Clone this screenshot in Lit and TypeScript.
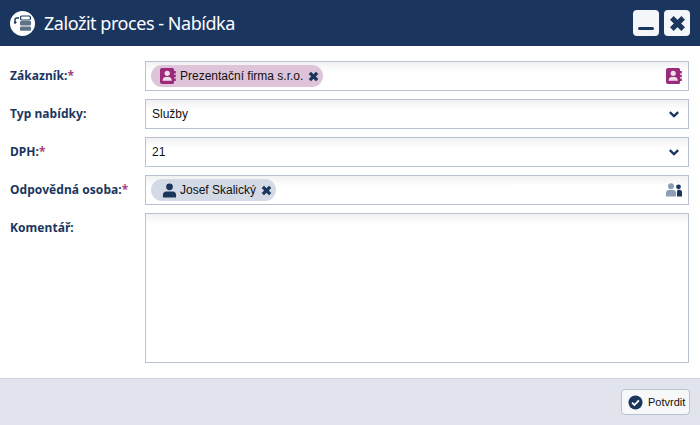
import { LitElement, html, css } from "lit";
import { customElement } from "lit/decorators.js";

const book = (c: string) => html`<svg width="16" height="16" viewBox="0 0 16 16"><path fill=${c} d="M2 0h10.500A1.500 1.500 0 0 1 14 1.500V3h1.800v2.400H14v1.400h1.800v2.400H14v1.400h1.800V13H14v1.500a1.500 1.500 0 0 1-1.500 1.500H2a2 2 0 0 1-2-2V2a2 2 0 0 1 2-2z"/><circle cx="7.200" cy="5.300" r="2.600" fill="#fff" opacity=".85"/><path fill="#fff" opacity=".85" d="M2.600 12.800c0-2.300 1.300-3.700 2.900-3.700h3.400c1.600 0 2.900 1.400 2.900 3.700z"/></svg>`;
const x = (s: number, c = "#1b365d") => html`<svg width=${s} height=${s} viewBox="0 0 12 12"><path d="M2 2l8 8M10 2l-8 8" stroke=${c} stroke-width="3.600" stroke-linecap="butt" fill="none"/></svg>`;
const chev = html`<svg width="10" height="7" viewBox="0 0 10 7"><path d="M.8 1.200 5 5.200l4.200-4" stroke="#1b365d" stroke-width="2.300" fill="none"/></svg>`;

@customElement("app-root")
export class AppRoot extends LitElement {
  static styles = css`
    :host { display: flex; flex-direction: column; width: 700px; height: 425px; background: #fff; overflow: hidden; font-family: "Liberation Sans", Arial, sans-serif; font-size: 12px; color: #1b2a41; }
    .head { height: 46px; flex: none; background: #1a365f; display: flex; align-items: center; padding: 0 10px; color: #fff; box-sizing: border-box; }
    .logo { width: 25px; height: 25px; border-radius: 50%; background: #fff; display: flex; align-items: center; justify-content: center; margin-right: 9px; }
    .title { flex: 1; font: 18px/21px "Noto Sans", sans-serif; letter-spacing: -.46px; color: #fff; padding-top: 1px; }
    .wbtn { width: 26px; height: 26px; border-radius: 4px; background: #f5f6f9; display: flex; align-items: center; justify-content: center; margin-left: 5px; }
    .body { flex: 1; padding: 15px 11px 15px 10px; display: flex; flex-direction: column; gap: 8px; }
    .row { display: flex; height: 30px; flex: none; }
    .row.big { height: 150px; }
    .lab { width: 135px; flex: none; font: bold 12px "Noto Sans", sans-serif; letter-spacing: .06px; color: #1a365f; padding-top: 6px; box-sizing: border-box; line-height: 17px; }
    .lab i { color: #a8447f; font-style: normal; font-weight: bold; }
    .box { flex: 1; border: 1px solid #b8c2d2; background: linear-gradient(#f1f1f1, #fff 10px); display: flex; align-items: center; padding: 0 5px; box-sizing: border-box; min-width: 0; }
    .plain { padding-left: 6px; color: #111; }
    .sp { flex: 1; }
    .chip { height: 22px; border-radius: 11px; display: flex; align-items: center; color: #111; box-sizing: border-box; }
    .chip.a { background: #dfc3d8; width: 172px; padding-left: 9px; }
    .chip.b { background: #d3dae6; width: 125px; padding-left: 11px; }
    .chip .t { margin-left: 4px; flex: none; }
    .chip.b .t { margin-left: 3px; }
    .chip .c { margin-left: 5px; display: flex; }
    .end { display: flex; margin-right: 1px; }
    .end.c { margin-right: 4px; }
    .foot { height: 47px; flex: none; background: #e1e4ec; border-top: 1px solid #ced2da; box-sizing: border-box; display: flex; justify-content: flex-end; align-items: flex-start; padding: 10px 10px 0 0; }
    .btn { width: 69px; height: 26px; box-sizing: border-box; border: 1px solid #b8c2d2; border-radius: 4px; background: #f7f8fa; display: flex; align-items: center; padding-left: 6px; gap: 5px; color: #111; font-size: 11px; }
  `;
  render() {
    return html`
      <div class="head">
        <div class="logo"><svg width="17" height="16" viewBox="0 0 17 16">
          <rect x="6.600" y="1" width="9.800" height="4" rx="1.200" fill="none" stroke="#1b365d" stroke-width="1.200"/>
          <rect x="6" y="6" width="11" height="4.400" rx="1" fill="#5f7188"/>
          <rect x="6" y="11.400" width="11" height="4.400" rx="1" fill="#5f7188"/>
          <path d="M5 3H2.400a1.400 1.400 0 0 0-1.400 1.400V8M1 8.400-.2 6.800M1 8.400l1.300-1.600" stroke="#1b365d" stroke-width="1.400" fill="none"/>
        </svg></div>
        <div class="title">Založit proces - Nabídka</div>
        <div class="wbtn"><svg width="18" height="18" viewBox="0 0 18 18"><rect x="1" y="13" width="16" height="3" rx="1.500" fill="#1b365d"/></svg></div>
        <div class="wbtn">${x(17)}</div>
      </div>
      <div class="body">
        <div class="row"><div class="lab">Zákazník:<i>*</i></div><div class="box">
          <div class="chip a">${book("#9c2a7c")}<span class="t">Prezentační firma s.r.o.</span><span class="c">${x(11)}</span></div>
          <span class="sp"></span><span class="end">${book("#9c2a7c")}</span></div></div>
        <div class="row"><div class="lab">Typ nabídky:</div><div class="box plain"><span>Služby</span><span class="sp"></span><span class="end c">${chev}</span></div></div>
        <div class="row"><div class="lab">DPH:<i>*</i></div><div class="box plain"><span>21</span><span class="sp"></span><span class="end c">${chev}</span></div></div>
        <div class="row"><div class="lab">Odpovědná osoba:<i>*</i></div><div class="box">
          <div class="chip b"><svg width="15" height="15" viewBox="0 0 16 16"><circle cx="8" cy="4" r="3.600" fill="#1b365d"/><path fill="#1b365d" d="M1 15.500v-3c0-2 1.500-3.500 3.500-3.500h7c2 0 3.500 1.500 3.500 3.500v3z"/></svg><span class="t">Josef Skalický</span><span class="c">${x(11)}</span></div>
          <span class="sp"></span><span class="end"><svg width="17" height="14" viewBox="0 0 17 14"><circle cx="6" cy="3.200" r="3" fill="#8d9db5"/><path fill="#8d9db5" d="M1 13.500V10c0-1.800 1.200-3 3-3h4c1.800 0 3 1.200 3 3v3.500z"/><circle cx="13.500" cy="3.800" r="2.400" fill="#1b365d"/><path fill="#1b365d" d="M12 13.500V9c0-1 .3-1.700.8-2.200h1.700c1.500 0 2.500 1 2.500 2.500v4.200z"/></svg></span></div></div>
        <div class="row big"><div class="lab">Komentář:</div><div class="box"></div></div>
      </div>
      <div class="foot"><div class="btn"><svg width="15" height="15" viewBox="0 0 16 16"><circle cx="8" cy="8" r="7.500" fill="#1b365d"/><path d="M4.300 8.200l2.600 2.500 4.700-4.900" stroke="#fff" stroke-width="2" fill="none"/></svg><span>Potvrdit</span></div></div>
    `;
  }
}
